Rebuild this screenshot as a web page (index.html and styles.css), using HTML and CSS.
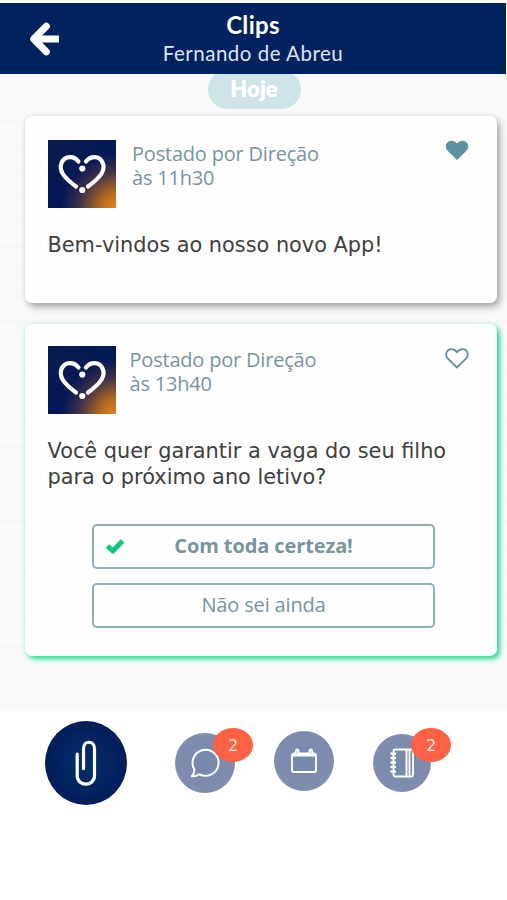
FILE: index.html
```html
<!DOCTYPE html>
<html lang="pt-BR">
<head>
<meta charset="utf-8">
<title>Clips</title>
<link rel="stylesheet" href="styles.css">
</head>
<body>
<svg class="defs" width="0" height="0" aria-hidden="true">
  <symbol id="logo" viewBox="0 0 68 68">
    <g fill="none" stroke="#fff" stroke-width="4.200" stroke-linecap="round">
      <path d="M30.500 21.500C26 15.500 17 15.500 13.700 22.500C10.500 30 15 37 28 46.500"/>
      <path d="M38 21.500C42.500 15.500 51.500 15.500 54.500 22.500C58 30 53 37 40 46.500"/>
    </g>
    <circle cx="34.300" cy="28.500" r="3.100" fill="#fff"/>
    <circle cx="34.300" cy="50" r="3.100" fill="#fff"/>
  </symbol>
  <symbol id="heart" viewBox="0 0 24 21">
    <path d="M12 19.500L2.700 10.300C-.3 6.700 1.500 1.200 6.300 1.200C9.200 1.200 10.700 2.600 12 4.200C13.300 2.600 14.800 1.200 17.700 1.200C22.500 1.200 24.300 6.700 21.300 10.300Z"/>
  </symbol>
</svg>
<header class="topbar">
  <svg class="back" viewBox="0 0 30 34"><path d="M30 17.500H8" stroke="#fff" stroke-width="7"/><path d="M17.300 4.700L4.700 17.500L17.300 30.300" fill="none" stroke="#fff" stroke-width="7" stroke-linecap="round" stroke-linejoin="round"/></svg>
  <div class="titles">
    <h1><span>Clips</span></h1>
    <p><span>Fernando de Abreu</span></p>
  </div>
</header>
<main class="feed">
  <div class="day"><span>Hoje</span></div>
  <article class="card first">
    <div class="head">
      <svg class="avatar"><use href="#logo"/></svg>
      <div class="meta"><span>Postado por Direção</span><br><span>às 11h30</span></div>
      <svg class="like liked"><use href="#heart"/></svg>
    </div>
    <p class="message"><span>Bem-vindos ao nosso novo App!</span></p>
  </article>
  <article class="card second">
    <div class="head">
      <svg class="avatar"><use href="#logo"/></svg>
      <div class="meta"><span>Postado por Direção</span><br><span>às 13h40</span></div>
      <svg class="like"><use href="#heart"/></svg>
    </div>
    <p class="message"><span>Você quer garantir a vaga do seu filho</span><br><span>para o próximo ano letivo?</span></p>
    <div class="options">
      <div class="option chosen">
        <svg class="check" viewBox="0 0 20 16"><path d="M2.500 8L7.800 13L17.500 3" fill="none" stroke="#0bcb7b" stroke-width="5" stroke-linejoin="round"/></svg>
        <span>Com toda certeza!</span>
      </div>
      <div class="option"><span>Não sei ainda</span></div>
    </div>
  </article>
</main>
<nav class="tabs">
  <div class="tab clip"><svg viewBox="0 0 22 46"><path d="M2.200 14V35.500C2.200 47 19.500 47 19.500 35.500V9C19.500 0 8.500 0 8.500 9V28.500" fill="none" stroke="#fff" stroke-width="3.200" stroke-linecap="round"/></svg></div>
  <div class="tab chat">
    <svg viewBox="0 0 30 30"><path d="M4.400 21.500A13 13 0 1 1 9.500 26.300Q5.500 28.500 1.800 28.200Q4.600 25 4.400 21.500Z" fill="none" stroke="#fff" stroke-width="1.900" stroke-linejoin="round"/></svg>
    <span class="badge">2</span>
  </div>
  <div class="tab calendar"><svg viewBox="0 0 28 26"><rect x="2" y="5.500" width="24" height="18.500" rx="2" fill="none" stroke="#fff" stroke-width="1.900"/><path d="M2 5H26V8.500H2Z" fill="#fff"/><rect x="5" y=".5" width="4.500" height="7.500" rx="2.200" fill="#fff"/><rect x="18.500" y=".5" width="4.500" height="7.500" rx="2.200" fill="#fff"/><path d="M7.200 2.500V6.500M20.700 2.500V6.500" stroke="#bcc4da" stroke-width="1"/></svg></div>
  <div class="tab notes">
    <svg viewBox="0 0 26 32"><g fill="none" stroke="#fff" stroke-width="1.900"><rect x="4.500" y="2.500" width="19.500" height="27" rx="2"/><path d="M17.500 2.500V29.500M20.500 2.500V29.500"/><path d="M2.500 6.500H6M2.500 11H6M2.500 15.500H6M2.500 20H6M2.500 24.500H6" stroke-width="2.400" stroke-linecap="round"/></g></svg>
    <span class="badge">2</span>
  </div>
</nav>
</body>
</html>
```
FILE: styles.css
```css
* { box-sizing: border-box; }
body { margin: 0; padding-top: 3px; height: 900px; background: #fff; overflow: hidden; }
h1, p { margin: 0; }
span { white-space: nowrap; }
.defs { display: block; }

.topbar { position: relative; z-index: 1; width: 506px; height: 71px; background: #002360; color: #fff; display: flex; font-family: Lato, sans-serif; }
.back { width: 30px; height: 35px; margin: 18px 0 0 29px; flex: none; }
.titles { width: 388px; text-align: center; }
h1 { font-size: 24px; line-height: 28px; margin-top: 8px; font-weight: 700; letter-spacing: .3px; }
.titles p { font-size: 20.5px; line-height: 26px; margin-top: 1px; color: #dce5f2; letter-spacing: .5px; }

.feed { display: flow-root; height: 637px; padding-left: 25px; background: repeating-linear-gradient(#f9f9f9 0 21px, #f6f6f6 22px 23px, #f9f9f9 24px 25px); }
.day { width: 93px; height: 39px; margin: -4px 0 0 182.500px; border-radius: 20px; background: #cfe4e8; color: #fff; font: 800 22px/37px Lato, sans-serif; text-align: center; }
.card { width: 472px; background: #fefefe; border-radius: 7px; padding: 24px 22px 0 22.500px; }
.first { height: 187px; margin-top: 7px; box-shadow: 3px 4px 7px rgba(0,0,0,.32), 0 0 4px rgba(0,0,0,.08); }
.second { height: 332px; margin-top: 21px; padding-top: 22px; box-shadow: 3px 3px 5px #2bdc98, 0 0 5px rgba(60,220,160,.25); }
.head { display: flex; height: 68px; }
.avatar { width: 68px; height: 68px; flex: none; background: radial-gradient(circle at 104% 104%, #f08a10 0, #b96c1e 18%, #3d304a 40%, rgba(2,23,85,0) 58%), linear-gradient(150deg, #061d4c, #00135d); }
.meta { margin: 2px 0 0 16.500px; width: 312.500px; font: 20px/24px "Open Sans", sans-serif; letter-spacing: -.2px; color: #78949f; }
.second .meta { margin-left: 14px; width: 315px; }
.like { width: 24px; height: 21px; flex: none; fill: none; stroke: #62929f; stroke-width: 1.800; }
.second .like { margin-top: 2px; }
.liked { fill: #5b91a0; stroke: #5b91a0; stroke-width: 1; }
.message { margin-top: 25px; font: 20.850px/25.500px "DejaVu Sans", Verdana, sans-serif; color: #404040; }
.options { margin: 33.500px 0 0 44.500px; display: flex; flex-direction: column; gap: 14px; }
.option { position: relative; width: 343px; height: 45px; border: 2px solid #8fafbb; border-radius: 5px; display: flex; justify-content: center; align-items: center; font: 20px/24px "Open Sans", sans-serif; letter-spacing: -.15px; color: #78949f; }
.chosen { font-weight: 700; letter-spacing: -.1px; }
.check { position: absolute; left: 11px; top: 12px; width: 20px; height: 16px; }

.tabs { display: flex; align-items: flex-start; padding: 10px 0 0 45px; }
.tab { position: relative; display: flex; align-items: center; justify-content: center; border-radius: 50%; background: radial-gradient(#7588ab, #858fb1); }
.clip { width: 82px; height: 84px; background: radial-gradient(#052f6d, #001552); }
.clip svg { width: 22px; height: 46px; }
.chat { width: 60px; height: 60px; margin: 12px 0 0 48px; }
.chat svg { width: 30px; height: 30px; }
.calendar { width: 60px; height: 60px; margin: 10px 0 0 39px; }
.calendar svg { width: 28px; height: 26px; }
.notes { width: 58px; height: 58px; margin: 13px 0 0 39px; }
.notes svg { width: 26px; height: 32px; }
.badge { position: absolute; left: 38px; top: -5px; width: 40px; height: 34px; border-radius: 50%; background: #fe6144; color: #ffe6df; font: 16px/36px "DejaVu Sans", sans-serif; text-align: center; }
.notes .badge { top: -6px; }
```
